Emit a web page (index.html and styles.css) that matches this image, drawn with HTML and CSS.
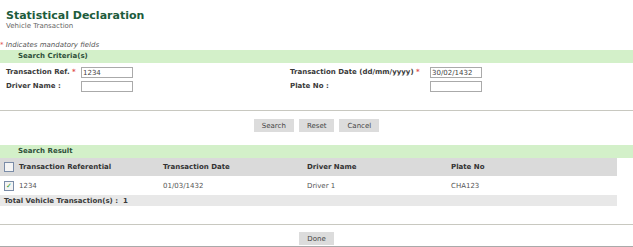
FILE: index.html
```html
<!DOCTYPE html>
<html>

<head>
	<meta charset="utf-8">
	<title>Statistical Declaration</title>
	<link rel="stylesheet" href="styles.css">
</head>

<body>
	<div class="page">
		<h1>Statistical Declaration</h1>
		<div class="subtitle">Vehicle Transaction</div>
		<div class="note"><span class="req">*</span> Indicates mandatory fields</div>

		<div class="band">Search Criteria(s)</div>
		<div class="criteria">
			<div class="field">
				<label class="lbl">Transaction Ref. <span class="req">*</span></label>
				<input type="text" class="box" value="1234">
			</div>
			<div class="field">
				<label class="lbl lbl-wide">Transaction Date (dd/mm/yyyy) <span class="req">*</span></label>
				<input type="text" class="box" value="30/02/1432">
			</div>
			<div class="field">
				<label class="lbl">Driver Name :</label>
				<input type="text" class="box">
			</div>
			<div class="field">
				<label class="lbl lbl-wide">Plate No :</label>
				<input type="text" class="box">
			</div>
		</div>
		<hr class="rule">
		<div class="actions">
			<button class="btn">Search</button>
			<button class="btn">Reset</button>
			<button class="btn">Cancel</button>
		</div>

		<div class="band band-result">Search Result</div>
		<table class="results">
			<colgroup>
				<col class="c-chk">
				<col class="c-data">
				<col class="c-data">
				<col class="c-data">
				<col>
			</colgroup>
			<thead>
				<tr>
					<th class="chk"><span class="cb"></span></th>
					<th>Transaction Referential</th>
					<th>Transaction Date</th>
					<th>Driver Name</th>
					<th>Plate No</th>
				</tr>
			</thead>
			<tbody>
				<tr>
					<td class="chk"><span class="cb checked">&#10003;</span></td>
					<td>1234</td>
					<td>01/03/1432</td>
					<td>Driver 1</td>
					<td>CHA123</td>
				</tr>
				<tr class="total">
					<td colspan="5">Total Vehicle Transaction(s) :&nbsp; 1</td>
				</tr>
			</tbody>
		</table>
		<hr class="rule">
		<div class="actions actions-done">
			<button class="btn">Done</button>
		</div>
		<hr class="rule rule-end">
	</div>
</body>

</html>
```

FILE: styles.css
```css
body {
	margin: 0;
	font-family: "DejaVu Sans", Verdana, sans-serif;
	font-size: 7px;
	color: #555;
	background-color: #fff;
}

.page {
	padding-top: 9px;
}

h1 {
	margin: 0 0 0 6px;
	font-size: 11px;
	line-height: 13px;
	color: #1d5c3c;
}

.subtitle {
	margin-left: 6px;
	font-size: 7px;
	line-height: 9px;
	color: #666;
}

.note {
	margin-top: 10px;
	font-size: 7px;
	line-height: 9px;
	font-style: italic;
	color: #555;
}

.req {
	color: #e05050;
}

.band {
	height: 13px;
	background-color: #d3f0c9;
	color: #2e4f3a;
	font-weight: bold;
	font-size: 7px;
	line-height: 13px;
	padding-left: 18px;
}

.criteria {
	display: grid;
	grid-template-columns: 284px 343px;
	row-gap: 3px;
	padding: 4px 0 0 6px;
}

.field {
	display: flex;
	align-items: center;
	height: 11px;
}

.lbl {
	width: 75px;
	font-weight: bold;
	font-size: 7px;
	line-height: 11px;
	color: #3a3a3a;
}

.lbl-wide {
	width: 140px;
}

.box {
	box-sizing: border-box;
	width: 52px;
	height: 11px;
	padding: 0 1px;
	margin: 0;
	border: 1px solid #aaa;
	font-family: "DejaVu Sans", Verdana, sans-serif;
	font-size: 7px;
	color: #444;
}

.rule {
	margin: 18px 0 0 0;
	border: none;
	border-top: 1px solid #c8c8c0;
}

.actions {
	display: flex;
	justify-content: center;
	gap: 5px;
	padding-top: 8px;
}

.btn {
	height: 13px;
	padding: 0 8px;
	border: none;
	border-radius: 0;
	background-color: #dcdcdc;
	font-family: "DejaVu Sans", Verdana, sans-serif;
	font-size: 7px;
	color: #444;
}

.band-result {
	margin-top: 13px;
}

.results {
	width: 617px;
	border-collapse: collapse;
	table-layout: fixed;
}

.c-chk {
	width: 16px;
}

.c-data {
	width: 144px;
}

.results th,
.results td {
	padding: 0 0 0 3px;
	text-align: left;
}

.results th {
	background-color: #dadada;
	height: 18px;
	font-size: 7px;
	color: #333;
}

.results td {
	height: 19px;
	color: #555;
}

.results .chk {
	padding-left: 4px;
}

.cb {
	display: inline-block;
	width: 8px;
	height: 8px;
	border: 1px solid #7a8ca8;
	background-color: #f4f4f4;
	font-size: 7px;
	line-height: 8px;
	text-align: center;
	color: #2a9a2a;
	vertical-align: middle;
}

.results .total td {
	height: 11px;
	padding-left: 4px;
	background-color: #e8e8e8;
	font-weight: bold;
	color: #3a3a3a;
}

.actions-done {
	padding-top: 7px;
}

.rule-end {
	margin-top: 1px;
	border-top: 2px solid #aaa;
}
```
